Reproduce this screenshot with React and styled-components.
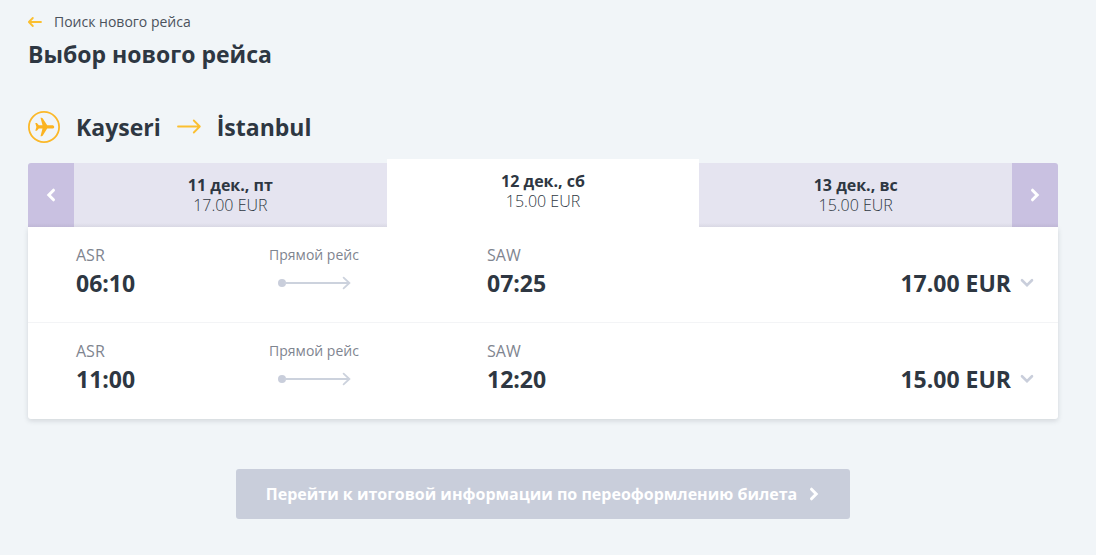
import React, { useState } from "react";
import styled, { createGlobalStyle } from "styled-components";

const GlobalStyle = createGlobalStyle`
  *, *::before, *::after { box-sizing: border-box; }
  body {
    margin: 0;
    background: #f1f5f8;
    color: #2e3742;
    font-family: "Open Sans", "Noto Sans", sans-serif;
  }
  button { font: inherit; color: inherit; border: 0; margin: 0; padding: 0; cursor: pointer; }
  svg { display: block; flex: none; }
`;

const Page = styled.main`
  padding: 10px 38px 36px 28px;
`;

const BackLink = styled.a`
  display: inline-flex;
  align-items: center;
  gap: 12px;
  font-size: 14px;
  line-height: 20px;
  color: #4b525c;
  text-decoration: none;
`;

const Title = styled.h1`
  margin: 6px 0 0;
  font-size: 23px;
  line-height: 32px;
  font-weight: 700;
`;

const Route = styled.h2`
  display: flex;
  align-items: center;
  gap: 16px;
  margin: 41px 0 0;
  font-size: 23px;
  line-height: 32px;
  font-weight: 700;
`;

const DayBar = styled.nav`
  display: flex;
  align-items: stretch;
  height: 64px;
  margin-top: 20px;
`;

const StepButton = styled.button`
  display: flex;
  align-items: center;
  justify-content: center;
  width: 46px;
  flex: none;
  color: #fff;
  background: linear-gradient(#c9c1e1 60px, #bfb7d6);
  border-radius: ${(p) => (p.$side === "left" ? "3px 0 0 0" : "0 3px 0 0")};
`;

const DayTab = styled.button`
  flex: 1;
  display: flex;
  flex-direction: column;
  align-items: center;
  justify-content: flex-start;
  padding-top: 12px;
  font-size: 16px;
  line-height: 20px;
  margin-top: ${(p) => (p.$active ? "-4px" : "0")};
  background: ${(p) => (p.$active ? "#fff" : "linear-gradient(#e5e4f0 60px, #d9d8e4)")};
`;

const DayName = styled.span`
  font-weight: 700;
`;

const DayPrice = styled.span`
  font-weight: 300;
`;

const FlightList = styled.ul`
  list-style: none;
  margin: 0;
  padding: 0;
  background: #fff;
  border-radius: 0 0 3px 3px;
  box-shadow: 0 2px 5px rgba(40, 50, 60, 0.15);
`;

const FlightRow = styled.li`
  display: grid;
  grid-template-columns: 156fr 164fr 91fr 200fr 347fr;
  align-items: start;
  min-height: 96px;
  padding: 17px 24px 22px 48px;

  &:not(:last-child) { border-bottom: 1px solid #f3f4f6; }
`;

const Point = styled.div`
  display: flex;
  flex-direction: column;
`;

const Airport = styled.span`
  font-size: 16px;
  line-height: 22px;
  font-weight: 500;
  color: #7f8590;
`;

const Time = styled.time`
  font-size: 23px;
  line-height: 34px;
  font-weight: 700;
`;

const Direct = styled.div`
  display: flex;
  flex-direction: column;
  align-items: center;
  gap: 10px;
  font-size: 14px;
  line-height: 22px;
  color: #7f8590;
`;

const DepartureColumn = styled(Point)`
  grid-column: 1;
`;

const ArrivalColumn = styled(Point)`
  grid-column: 4;
`;

const DirectColumn = styled(Direct)`
  grid-column: 2;
`;

const PriceButton = styled.button`
  grid-column: 5;
  justify-self: end;
  display: flex;
  align-items: center;
  gap: 9px;
  padding-top: 22px;
  background: none;
  font-size: 23px;
  line-height: 34px;
  font-weight: 700;
`;

const Submit = styled.button`
  display: flex;
  align-items: center;
  gap: 12px;
  min-height: 50px;
  margin: 50px auto 0;
  padding: 0 31px 0 30px;
  border-radius: 3px;
  background: #c9cedb;
  color: #fff;
  font-size: 16px;
  line-height: 22px;
  font-weight: 700;
`;

const BackArrow = () => (
  <svg width="14" height="10" viewBox="0 0 14 10" fill="none" stroke="#fbbf30" strokeWidth="1.8" strokeLinecap="round" strokeLinejoin="round" aria-hidden="true">
    <path d="M13 5H1M4.8 1L.9 5l3.9 4" />
  </svg>
);

const RouteArrow = () => (
  <svg width="24" height="16" viewBox="0 0 24 16" fill="none" stroke="#fbbf30" strokeWidth="1.8" strokeLinecap="round" strokeLinejoin="round" aria-label="→" role="img">
    <path d="M1 7.5h21.6M16.8 1.5l6 6-6 6" />
  </svg>
);

const PlaneBadge = () => (
  <svg width="32" height="32" viewBox="0 0 32 32" aria-hidden="true">
    <circle cx="16" cy="16" r="15.1" fill="none" stroke="#fbb829" strokeWidth="1.8" />
    <path
      fill="#fbb321"
      d="M26.2 15.9c0 1-.9 1.6-2.1 1.6h-4.9l-4.4 7c-.3.5-.7.7-1.2.7h-1.1l2-7.7h-3.7l-1.9 2.2H7.3l1.1-3.8-1.1-3.8h1.6l1.9 2.2h3.7l-2-7.6h1.1c.5 0 .9.2 1.2.7l4.4 6.9h4.9c1.2 0 2.1.6 2.1 1.6z"
    />
  </svg>
);

const SideChevron = ({ left }) => (
  <svg width="10" height="14" viewBox="0 0 10 14" fill="none" stroke="currentColor" strokeWidth="3" strokeLinecap="round" strokeLinejoin="miter" aria-hidden="true">
    <path d={left ? "M7.5 2.2L2.8 7l4.7 4.8" : "M2.5 2.2L7.2 7l-4.7 4.8"} />
  </svg>
);

const DownChevron = () => (
  <svg width="14" height="10" viewBox="0 0 14 10" fill="none" stroke="#c9cedb" strokeWidth="2.6" strokeLinecap="round" aria-hidden="true">
    <path d="M2 2.2l5 4.9 5-4.9" />
  </svg>
);

const FlightLine = () => (
  <svg width="74" height="14" viewBox="0 0 74 14" fill="none" stroke="#ccd2dd" strokeWidth="1.8" strokeLinecap="round" aria-hidden="true">
    <circle cx="5" cy="7" r="4" fill="#c9cedb" stroke="none" />
    <path d="M8 7h64M66.6 1.6L72.4 7l-5.8 5.4" />
  </svg>
);

const days = [
  { name: "11 дек., пт", price: "17.00 EUR" },
  { name: "12 дек., сб", price: "15.00 EUR" },
  { name: "13 дек., вс", price: "15.00 EUR" },
];

const flights = [
  { departs: "06:10", arrives: "07:25", price: "17.00 EUR" },
  { departs: "11:00", arrives: "12:20", price: "15.00 EUR" },
];

export default function App() {
  const [day, setDay] = useState(1);

  return (
    <>
      <GlobalStyle />
      <Page>
        <BackLink href="#search">
          <BackArrow />
          Поиск нового рейса
        </BackLink>
        <Title>Выбор нового рейса</Title>
        <Route>
          <PlaneBadge />
          <span>Kayseri</span>
          <RouteArrow />
          <span>İstanbul</span>
        </Route>

        <DayBar>
          <StepButton type="button" $side="left" aria-label="Назад" onClick={() => setDay(Math.max(0, day - 1))}>
            <SideChevron left />
          </StepButton>
          {days.map((d, i) => (
            <DayTab key={d.name} type="button" $active={i === day} aria-pressed={i === day} onClick={() => setDay(i)}>
              <DayName>{d.name}</DayName>
              <DayPrice>{d.price}</DayPrice>
            </DayTab>
          ))}
          <StepButton type="button" $side="right" aria-label="Вперёд" onClick={() => setDay(Math.min(days.length - 1, day + 1))}>
            <SideChevron />
          </StepButton>
        </DayBar>

        <FlightList>
          {flights.map((f) => (
            <FlightRow key={f.departs}>
              <DepartureColumn>
                <Airport>ASR</Airport>
                <Time>{f.departs}</Time>
              </DepartureColumn>
              <DirectColumn>
                Прямой рейс
                <FlightLine />
              </DirectColumn>
              <ArrivalColumn>
                <Airport>SAW</Airport>
                <Time>{f.arrives}</Time>
              </ArrivalColumn>
              <PriceButton type="button">
                {f.price}
                <DownChevron />
              </PriceButton>
            </FlightRow>
          ))}
        </FlightList>

        <Submit type="button">
          Перейти к итоговой информации по переоформлению билета
          <SideChevron />
        </Submit>
      </Page>
    </>
  );
}
